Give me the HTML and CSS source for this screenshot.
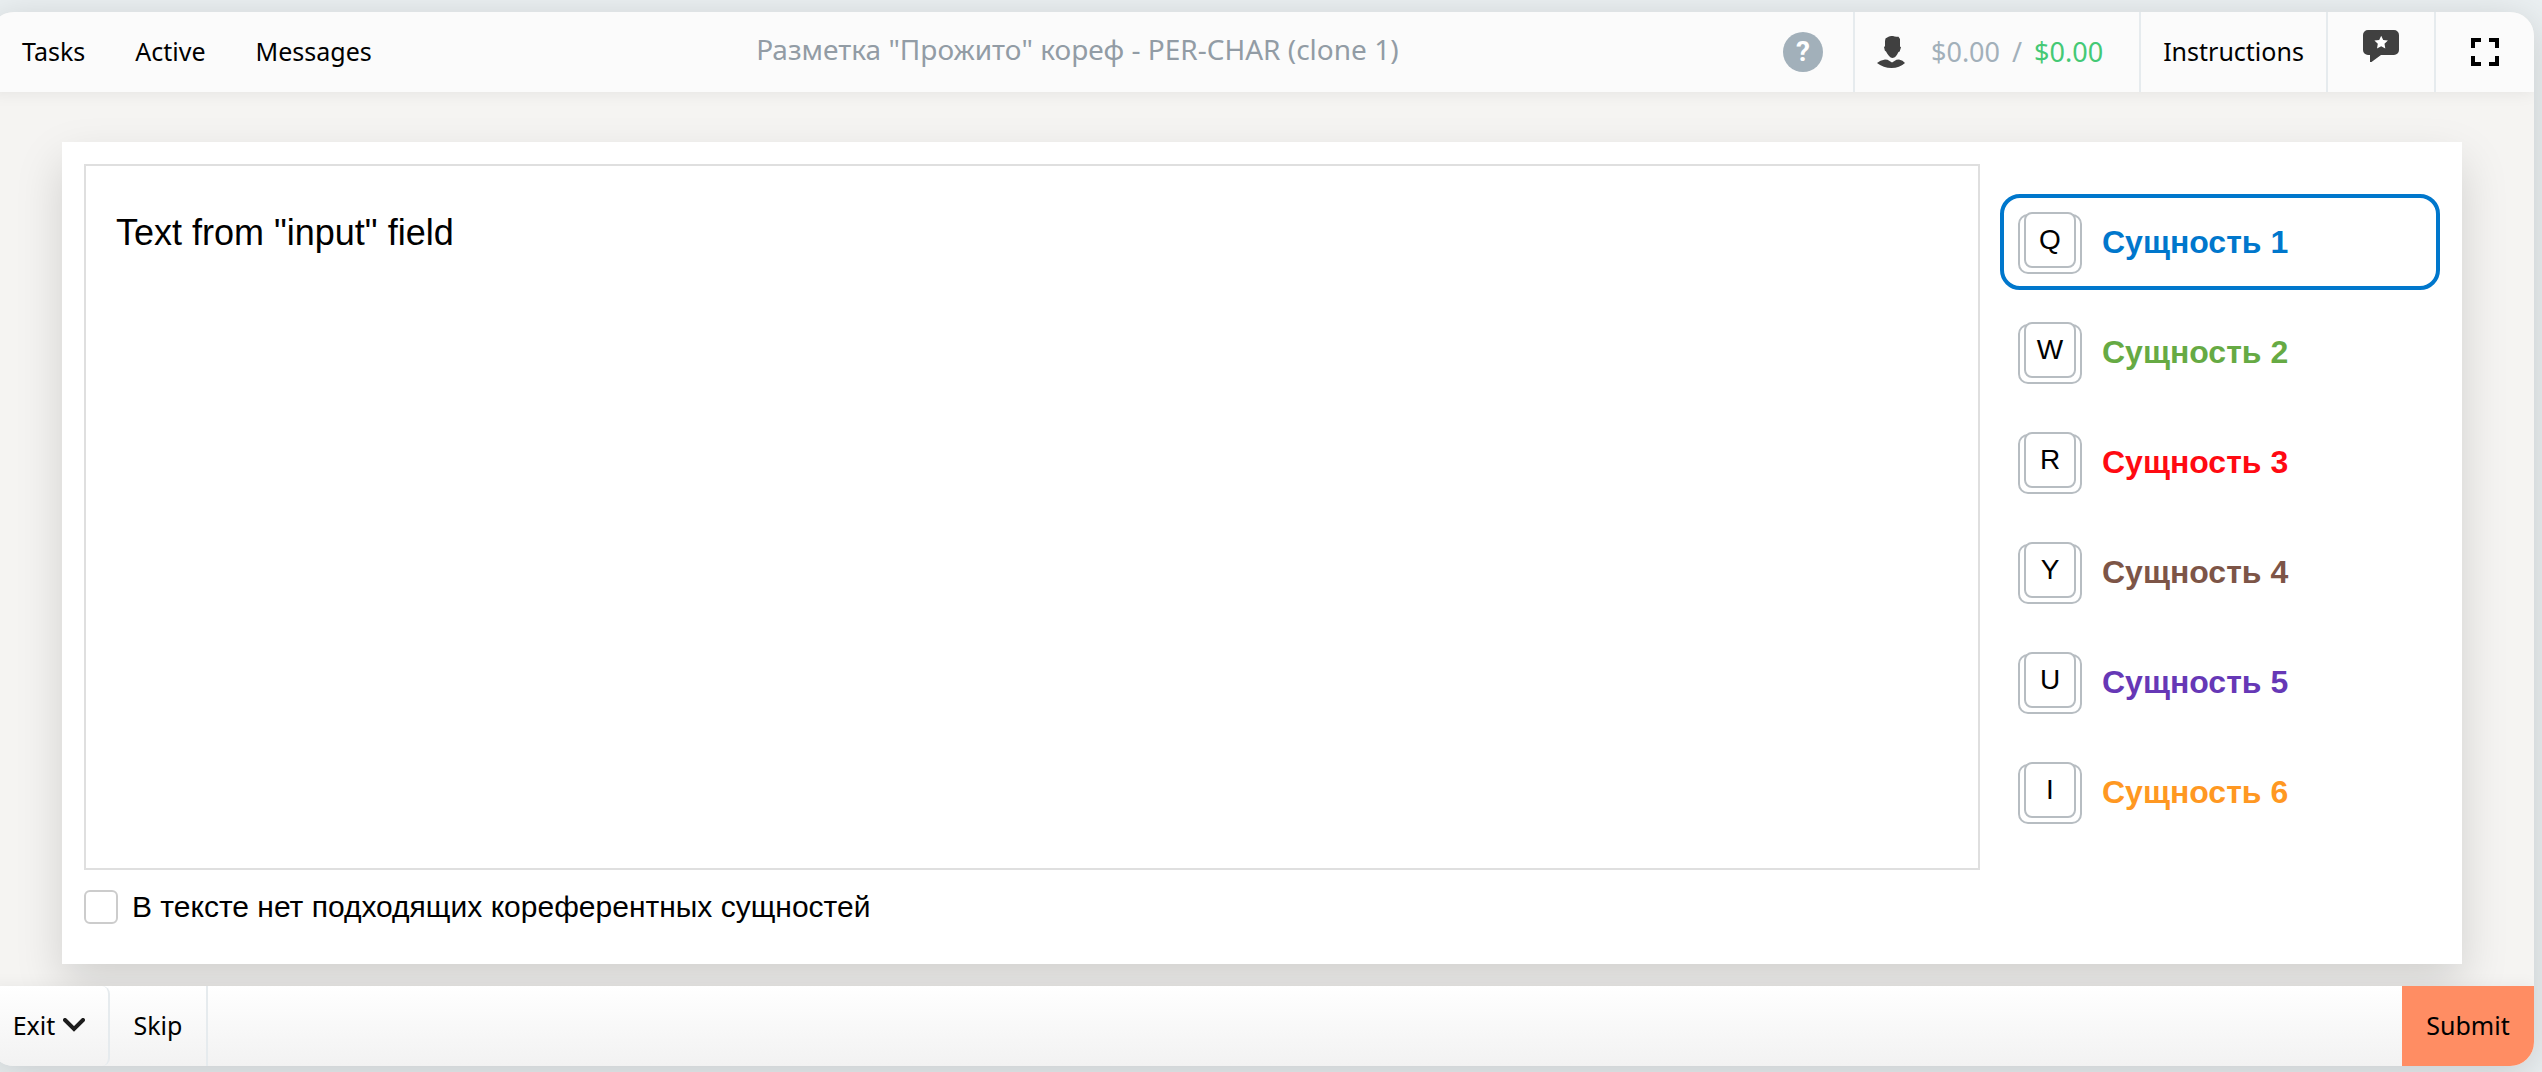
FILE: index.html
```html
<!DOCTYPE html>
<html lang="ru">
<head>
<meta charset="utf-8">
<meta name="viewport" content="width=device-width, initial-scale=1">
<title>Разметка "Прожито"</title>
<link rel="stylesheet" href="styles.css">
</head>
<body>
<div class="window">
  <header class="header">
    <nav class="nav">
      <a class="nav-link" href="#tasks">Tasks</a>
      <a class="nav-link" href="#active">Active</a>
      <a class="nav-link" href="#messages">Messages</a>
    </nav>
    <h1 class="title">Разметка "Прожито" кореф - PER-CHAR (clone 1)</h1>
    <div class="tools">
      <button class="tool tool-help" type="button" aria-label="Help"><span class="help">?</span></button>
      <div class="tool tool-wallet">
        <svg width="28" height="32" viewBox="0 0 28 32" aria-hidden="true">
          <path fill="#404040" d="M8.500 2.500C11 1 12 0 14.500 0c2 0 4 .8 7 .8L23 3v7.500l1 .7-1.300 4.200-1.200.6C20 19 18 22 15.500 22S11 19 9 15.500l-1.200-1L7 11l1-.7V5zM0 27q3-3 8-3.500l2.500.3L15 26.500l4.500-2.700L22 23.500q4 .5 6 3.500-5.500 5-13.500 5T0 27z"/>
        </svg>
        <span class="money"><span>$0.00</span><span>/</span><span class="money-total">$0.00</span></span>
      </div>
      <button class="tool tool-text" type="button">Instructions</button>
      <button class="tool tool-feedback" type="button" aria-label="Feedback">
        <svg width="36" height="32" viewBox="0 0 36 32" aria-hidden="true">
          <path fill="#404040" d="M5 0h26a5 5 0 0 1 5 5v15a5 5 0 0 1-5 5H18L8.500 32H7v-7H5a5 5 0 0 1-5-5V5a5 5 0 0 1 5-5z"/>
          <path fill="#fff" d="m18.200 5.700 2 4.200 4.700.6-3.400 3.200.8 4.700-4.100-2.200-4.200 2.200.8-4.700-3.400-3.200 4.800-.6z"/>
        </svg>
      </button>
      <button class="tool tool-full" type="button" aria-label="Full screen">
        <svg width="28" height="28" viewBox="0 0 28 28" aria-hidden="true">
          <path fill="none" stroke="#000" stroke-width="4" d="M2 10V2h8M18 2h8v8M26 18v8h-8M10 26H2v-8"/>
        </svg>
      </button>
    </div>
  </header>

  <main class="main">
    <section class="card">
      <div class="work">
        <div class="editor">Text from "input" field</div>
        <label class="check"><input class="check-box" type="checkbox"><span>В тексте нет подходящих кореферентных сущностей</span></label>
      </div>
      <div class="entities">
        <button class="entity entity-1 is-selected" type="button"><kbd class="key"><span class="cap">Q</span></kbd>Сущность 1</button>
        <button class="entity entity-2" type="button"><kbd class="key"><span class="cap">W</span></kbd>Сущность 2</button>
        <button class="entity entity-3" type="button"><kbd class="key"><span class="cap">R</span></kbd>Сущность 3</button>
        <button class="entity entity-4" type="button"><kbd class="key"><span class="cap">Y</span></kbd>Сущность 4</button>
        <button class="entity entity-5" type="button"><kbd class="key"><span class="cap">U</span></kbd>Сущность 5</button>
        <button class="entity entity-6" type="button"><kbd class="key"><span class="cap">I</span></kbd>Сущность 6</button>
      </div>
    </section>
  </main>

  <footer class="footer">
    <button class="action action-exit" type="button"><span>Exit</span>
      <svg width="22" height="14" viewBox="0 0 22 14" aria-hidden="true"><path fill="none" stroke="#1c1c1c" stroke-width="4" stroke-linecap="round" d="m2 2 9 9 9-9"/></svg>
    </button>
    <button class="action action-skip" type="button">Skip</button>
    <button class="action action-submit" type="button">Submit</button>
  </footer>
</div>
</body>
</html>
```
FILE: styles.css
```css
* { box-sizing: border-box; }

body {
  margin: 0;
  min-height: 100vh;
  display: flex;
  overflow-x: hidden;
  background: #ebf0f2;
  color: #000;
  font-family: "Noto Sans", sans-serif;
  font-size: 25px;
}

button {
  margin: 0;
  padding: 0;
  border: 0;
  background: none;
  color: inherit;
  font: inherit;
  cursor: pointer;
}

svg { display: block; flex: none; }

/* The window runs off the left edge of the viewport. */
.window {
  flex: 1;
  min-width: 0;
  display: flex;
  flex-direction: column;
  margin: 12px 8px 6px -10px;
  border-radius: 24px;
  background: #f5f4f2;
  box-shadow: 0 8px 40px rgba(0, 0, 0, .16);
  overflow: hidden;
}

.header {
  display: flex;
  height: 80px;
  background: #fbfbfb;
  box-shadow: 0 0 16px rgba(0, 0, 0, .08);
  z-index: 1;
}

.nav {
  display: flex;
  align-items: center;
  gap: 50px;
  padding: 0 0 2px 32px;
}

.nav-link { color: #000; text-decoration: none; }

.title {
  flex: 1;
  margin: 0;
  align-self: center;
  padding-bottom: 6px;
  color: #929ca5;
  font-size: 28px;
  font-weight: 400;
  text-align: center;
  white-space: nowrap;
}

.tools { display: flex; }

.tool {
  display: flex;
  align-items: center;
  justify-content: center;
  border-left: 2px solid #e6ebee;
}

.tool-help { border: 0; padding-right: 30px; }

.help {
  width: 40px;
  height: 40px;
  border-radius: 50%;
  background: #a2b0ba;
  color: #fff;
  font: 700 28px/40px Roboto, sans-serif;
  text-align: center;
}

.tool-wallet {
  width: 286px;
  justify-content: flex-start;
  gap: 26px;
  padding-left: 22px;
}

.money {
  display: flex;
  gap: 12px;
  padding-bottom: 2px;
  color: #a2b0ba;
  font-size: 27px;
}

.money-total { color: #44c975; }
.tool-text { width: 187px; padding-bottom: 2px; }
.tool-feedback { width: 108px; padding-bottom: 12px; }
.tool-full { width: 100px; }

.main {
  flex: 1;
  display: flex;
  padding: 50px 72px 22px;
}

.card {
  flex: 1;
  display: flex;
  gap: 20px;
  padding: 22px 22px 40px;
  background: #fff;
  box-shadow: 0 20px 44px rgba(0, 0, 0, .15);
  font-family: "Liberation Sans", Arial, sans-serif;
}

.work {
  flex: 1;
  display: flex;
  flex-direction: column;
  gap: 20px;
}

.editor {
  flex: 1;
  padding: 46px 30px;
  border: 2px solid #dfdfdf;
  font-size: 36px;
  line-height: 42px;
}

.check {
  display: flex;
  align-items: center;
  gap: 14px;
  font-size: 30px;
  line-height: 34px;
}

.check-box {
  appearance: none;
  width: 34px;
  height: 34px;
  margin: 0;
  border: 2px solid #ccc;
  border-radius: 6px;
  background: #fff;
}

.check-box:checked { background: #07c; }

.entities {
  width: 440px;
  display: flex;
  flex-direction: column;
  gap: 14px;
  padding-top: 30px;
}

.entity {
  display: flex;
  align-items: center;
  gap: 20px;
  height: 96px;
  padding: 0 14px;
  border: 4px solid transparent;
  border-radius: 20px;
  font-size: 32px;
  font-weight: 700;
}

.entity.is-selected { border-color: currentColor; }
.entity-1 { color: #07c; }
.entity-2 { color: #6a4; }
.entity-3 { color: #ff0a12; }
.entity-4 { color: #7d5547; }
.entity-5 { color: #6638b6; }
.entity-6 { color: #ff9822; }

.key {
  display: flex;
  justify-content: center;
  width: 64px;
  height: 60px;
  margin-top: 4px;
  border: 2px solid #b7bdc2;
  border-radius: 10px;
  color: #000;
  font: 400 28px/52px "Liberation Sans", Arial, sans-serif;
}

.cap {
  flex: none;
  width: 52px;
  height: 56px;
  margin-top: -4px;
  border: 2px solid #b7bdc2;
  border-radius: 8px;
  background: #fff;
}

.footer {
  display: flex;
  height: 80px;
  background: linear-gradient(#fff, #f2f2f2);
  box-shadow: 0 0 16px rgba(0, 0, 0, .06);
  z-index: 1;
}

.action {
  display: flex;
  align-items: center;
  justify-content: center;
  gap: 8px;
  padding-bottom: 2px;
  border-right: 2px solid #e6ebee;
}

.action-exit { width: 120px; border-radius: 0 8px 8px 0; }
.action-skip { width: 98px; }
.action-submit { width: 132px; margin-left: auto; border: 0; background: #ff8d63; }
```
